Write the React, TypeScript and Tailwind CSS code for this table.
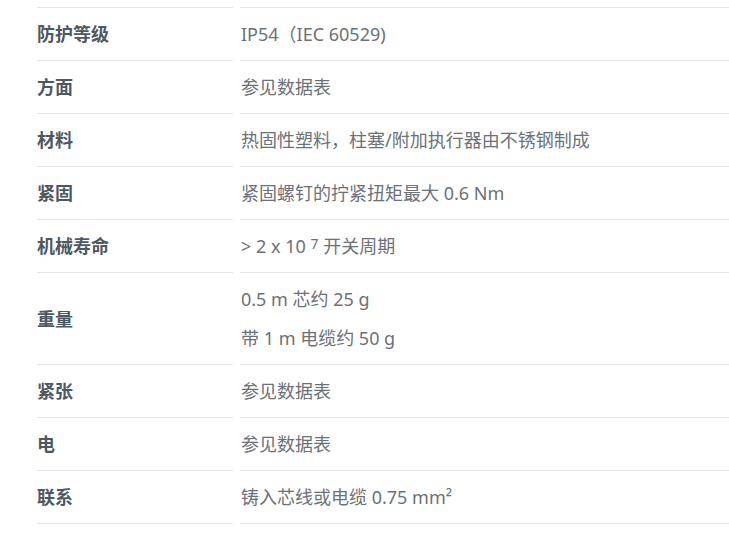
import React from 'react'

type Row = { label: string; values: React.ReactNode[] }

const rows: Row[] = [
  { label: '防护等级', values: ['IP54（IEC 60529)'] },
  { label: '方面', values: ['参见数据表'] },
  { label: '材料', values: ['热固性塑料，柱塞/附加执行器由不锈钢制成'] },
  { label: '紧固', values: ['紧固螺钉的拧紧扭矩最大 0.6 Nm'] },
  {
    label: '机械寿命',
    values: [
      <>
        &gt; 2 x 10 <sup className="text-[14px] relative -top-[4px]">7</sup> 开关周期
      </>,
    ],
  },
  { label: '重量', values: ['0.5 m 芯约 25 g', '带 1 m 电缆约 50 g'] },
  { label: '紧张', values: ['参见数据表'] },
  { label: '电', values: ['参见数据表'] },
  { label: '联系', values: ['铸入芯线或电缆 0.75 mm²'] },
]

export default function App() {
  return (
    <div
      className="w-[729px] h-[535px] overflow-hidden bg-white pl-[37px]"
      style={{ fontFamily: '"Noto Sans", "Noto Sans CJK SC", sans-serif' }}
    >
      <div className="grid grid-cols-[196px_1fr] gap-x-[7px]">
        <div className="h-[8px] border-b border-[#e3e5e8]" />
        <div className="h-[8px] border-b border-[#e3e5e8]" />
        {rows.map((row) => (
          <React.Fragment key={row.label}>
            <div className="flex items-center border-b border-[#e3e5e8] text-[18px] font-bold text-[#4e5862] leading-[22px]">
              {row.label}
            </div>
            <div className="flex flex-col justify-center gap-[17px] border-b border-[#e3e5e8] py-[15px] pl-px text-[18px] text-[#6c7177] leading-[22px]">
              {row.values.map((v, i) => (
                <div key={i}>{v}</div>
              ))}
            </div>
          </React.Fragment>
        ))}
      </div>
    </div>
  )
}
